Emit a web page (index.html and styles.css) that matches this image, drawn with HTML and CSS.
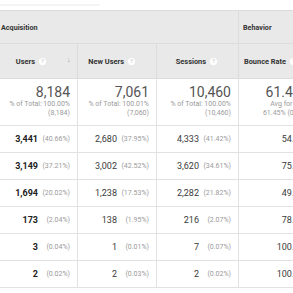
FILE: index.html
```html
<!DOCTYPE html>
<html lang="en">
<head>
<meta charset="utf-8">
<title>Acquisition report</title>
<link rel="stylesheet" href="styles.css">
</head>
<body>
<div class="frame">
  <div class="top"><div class="top-line"></div></div>
  <div class="table">
    <div class="grp grp-acq">Acquisition</div>
    <div class="grp grp-beh">Behavior</div>

    <div class="hd hd-sorted"><span class="label">Users</span><span class="help">?</span><span class="sort">&#8595;</span></div>
    <div class="hd"><span class="label">New Users</span><span class="help">?</span></div>
    <div class="hd"><span class="label">Sessions</span><span class="help">?</span></div>
    <div class="hd"><span class="label">Bounce Rate</span><span class="help">?</span></div>

    <div class="tot"><div class="big">8,184</div><div class="sub">% of Total: 100.00%</div><div class="sub">(8,184)</div></div>
    <div class="tot"><div class="big">7,061</div><div class="sub">% of Total: 100.01%</div><div class="sub">(7,060)</div></div>
    <div class="tot"><div class="big">10,460</div><div class="sub">% of Total: 100.00%</div><div class="sub">(10,460)</div></div>
    <div class="tot"><div class="big">61.45%</div><div class="sub">Avg for View:</div><div class="sub">61.45% (0.00%)</div></div>

    <div class="cell"><span class="num num-strong">3,441</span><span class="pct">(40.66%)</span></div>
    <div class="cell"><span class="num">2,680</span><span class="pct">(37.95%)</span></div>
    <div class="cell"><span class="num">4,333</span><span class="pct">(41.42%)</span></div>
    <div class="cell"><span class="num">54.58%</span></div>

    <div class="cell"><span class="num num-strong">3,149</span><span class="pct">(37.21%)</span></div>
    <div class="cell"><span class="num">3,002</span><span class="pct">(42.52%)</span></div>
    <div class="cell"><span class="num">3,620</span><span class="pct">(34.61%)</span></div>
    <div class="cell"><span class="num">75.10%</span></div>

    <div class="cell"><span class="num num-strong">1,694</span><span class="pct">(20.02%)</span></div>
    <div class="cell"><span class="num">1,238</span><span class="pct">(17.53%)</span></div>
    <div class="cell"><span class="num">2,282</span><span class="pct">(21.82%)</span></div>
    <div class="cell"><span class="num">49.21%</span></div>

    <div class="cell"><span class="num num-strong">173</span><span class="pct">(2.04%)</span></div>
    <div class="cell"><span class="num">138</span><span class="pct">(1.95%)</span></div>
    <div class="cell"><span class="num">216</span><span class="pct">(2.07%)</span></div>
    <div class="cell"><span class="num">78.24%</span></div>

    <div class="cell"><span class="num num-strong">3</span><span class="pct">(0.04%)</span></div>
    <div class="cell"><span class="num">1</span><span class="pct">(0.01%)</span></div>
    <div class="cell"><span class="num">7</span><span class="pct">(0.07%)</span></div>
    <div class="cell"><span class="num">100.00%</span></div>

    <div class="cell"><span class="num num-strong">2</span><span class="pct">(0.02%)</span></div>
    <div class="cell"><span class="num">2</span><span class="pct">(0.03%)</span></div>
    <div class="cell"><span class="num">2</span><span class="pct">(0.02%)</span></div>
    <div class="cell"><span class="num">100.00%</span></div>
  </div>
</div>
</body>
</html>
```

FILE: styles.css
```css
html, body {
  margin: 0;
  padding: 0;
  background: #ffffff;
}

.frame {
  width: 293px;
  height: 293px;
  overflow: hidden;
  font-family: Roboto, "Liberation Sans", Arial, sans-serif;
  color: #333333;
}

.top {
  height: 10px;
  padding-top: 4px;
  box-sizing: border-box;
}

.top-line {
  width: 100px;
  height: 2px;
  background: #f4f4f4;
}

.table {
  display: grid;
  grid-template-columns: 78px 79px 82px 80px;
  width: 319px;
}

.table > div {
  box-sizing: border-box;
}

.grp {
  height: 34px;
  background: #e9e9e9;
  border-top: 1px solid #dcdcdc;
  border-bottom: 1px solid #dcdcdc;
  display: flex;
  align-items: center;
  font-size: 7.2px;
  font-weight: 700;
  color: #333333;
}

.grp-acq {
  grid-column: span 3;
  padding-left: 1px;
  border-right: 1px solid #dcdcdc;
}

.grp-beh {
  padding-left: 4px;
}

.hd {
  height: 35px;
  background: #e9e9e9;
  border-bottom: 1px solid #dcdcdc;
  border-right: 1px solid #dcdcdc;
  display: flex;
  align-items: center;
  justify-content: flex-end;
  padding-right: 21px;
  font-size: 7.4px;
  font-weight: 700;
  color: #333333;
}

.hd-sorted {
  padding-right: 4px;
}

.help {
  width: 7px;
  height: 7px;
  margin-left: 4px;
  border-radius: 50%;
  background: #ffffff;
  color: #c8c8c8;
  font-size: 5px;
  line-height: 7px;
  text-align: center;
  font-weight: 700;
}

.sort {
  margin-left: 21px;
  width: 6px;
  font-size: 7px;
  color: #9a9a9a;
  line-height: 7px;
  position: relative;
  top: -1px;
}

.tot {
  height: 47px;
  border-bottom: 1px solid #e2e2e2;
  border-right: 1px solid #e2e2e2;
  padding: 5px 7px 0 0;
  text-align: right;
}

.big {
  font-size: 14px;
  line-height: 16px;
  color: #555555;
}

.sub {
  font-size: 7px;
  line-height: 9px;
  color: #9a9a9a;
  white-space: nowrap;
}

.cell {
  height: 27px;
  border-bottom: 1px solid #e2e2e2;
  border-right: 1px solid #e2e2e2;
  display: flex;
  align-items: center;
  justify-content: flex-end;
  padding-right: 7px;
}

.num {
  font-size: 9px;
  color: #3a3a3a;
}

.num-strong {
  font-weight: 700;
  color: #222222;
}

.pct {
  display: inline-block;
  width: 32px;
  text-align: right;
  font-size: 7px;
  color: #9a9a9a;
}
```
